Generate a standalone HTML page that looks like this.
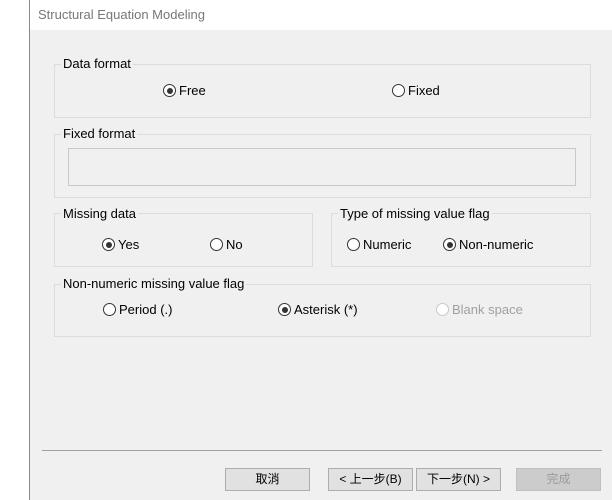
<!DOCTYPE html><html><head><style>
body{margin:0;width:612px;height:500px;background:#fff;position:relative;overflow:hidden;font-family:"Liberation Sans","Noto Sans CJK TC",sans-serif;font-size:13px;color:#000}
.a{position:absolute}
.win{left:29px;top:0;width:583px;height:500px;border-left:1px solid #8a8a8a;background:#f0f0f0}
.tb{left:30px;top:0;width:582px;height:30px;background:#fff}
.g{position:absolute;border:1px solid #dcdcdc;box-sizing:border-box}
.gl{position:absolute;background:#f0f0f0;padding:0 2px;white-space:nowrap}
.r{position:absolute;white-space:nowrap;line-height:15px}
.r i{display:inline-block;width:13px;height:13px;border:1px solid #333;border-radius:50%;vertical-align:-2px;margin-right:3px;box-sizing:border-box;background:#fff;position:relative}
.r i.s::after{content:"";position:absolute;left:2.5px;top:2.5px;width:6px;height:6px;border-radius:50%;background:#333}
.r.d{color:#a0a0a0}.r.d i{border-color:#c8c8c8}
.b{position:absolute;top:468px;height:23px;width:85px;box-sizing:border-box;border:1px solid #adadad;background:#e1e1e1;text-align:center;line-height:21px;font-size:12px}
</style></head><body>
<div class="a win"></div><div class="a tb"></div>
<div class="a" style="left:38px;top:7px;color:#777;font-size:13px">Structural Equation Modeling</div>

<div class="g" style="left:54px;top:64px;width:537px;height:54px"></div>
<div class="gl" style="left:61px;top:56px">Data format</div>
<div class="r" style="left:163px;top:83px"><i class="s"></i>Free</div>
<div class="r" style="left:392px;top:83px"><i></i>Fixed</div>

<div class="g" style="left:54px;top:134px;width:537px;height:64px"></div>
<div class="gl" style="left:61px;top:126px">Fixed format</div>
<div class="g" style="left:68px;top:148px;width:508px;height:38px;border-color:#c8c8c8"></div>

<div class="g" style="left:54px;top:213px;width:259px;height:54px"></div>
<div class="gl" style="left:61px;top:206px">Missing data</div>
<div class="r" style="left:102px;top:237px"><i class="s"></i>Yes</div>
<div class="r" style="left:210px;top:237px"><i></i>No</div>

<div class="g" style="left:331px;top:213px;width:260px;height:54px"></div>
<div class="gl" style="left:338px;top:206px">Type of missing value flag</div>
<div class="r" style="left:347px;top:237px"><i></i>Numeric</div>
<div class="r" style="left:443px;top:237px"><i class="s"></i>Non-numeric</div>

<div class="g" style="left:54px;top:284px;width:537px;height:53px"></div>
<div class="gl" style="left:61px;top:276px">Non-numeric missing value flag</div>
<div class="r" style="left:103px;top:302px"><i></i>Period (.)</div>
<div class="r" style="left:278px;top:302px"><i class="s"></i>Asterisk (*)</div>
<div class="r d" style="left:436px;top:302px"><i></i>Blank space</div>

<div class="a" style="left:42px;top:450px;width:560px;height:1px;background:#a0a0a0"></div>
<div class="b" style="left:225px">取消</div>
<div class="b" style="left:328px">&lt; 上一步(B)</div>
<div class="b" style="left:416px">下一步(N) &gt;</div>
<div class="b" style="left:516px;color:#9a9a9a;background:#cccccc;border-color:#bfbfbf">完成</div>
</body></html>
